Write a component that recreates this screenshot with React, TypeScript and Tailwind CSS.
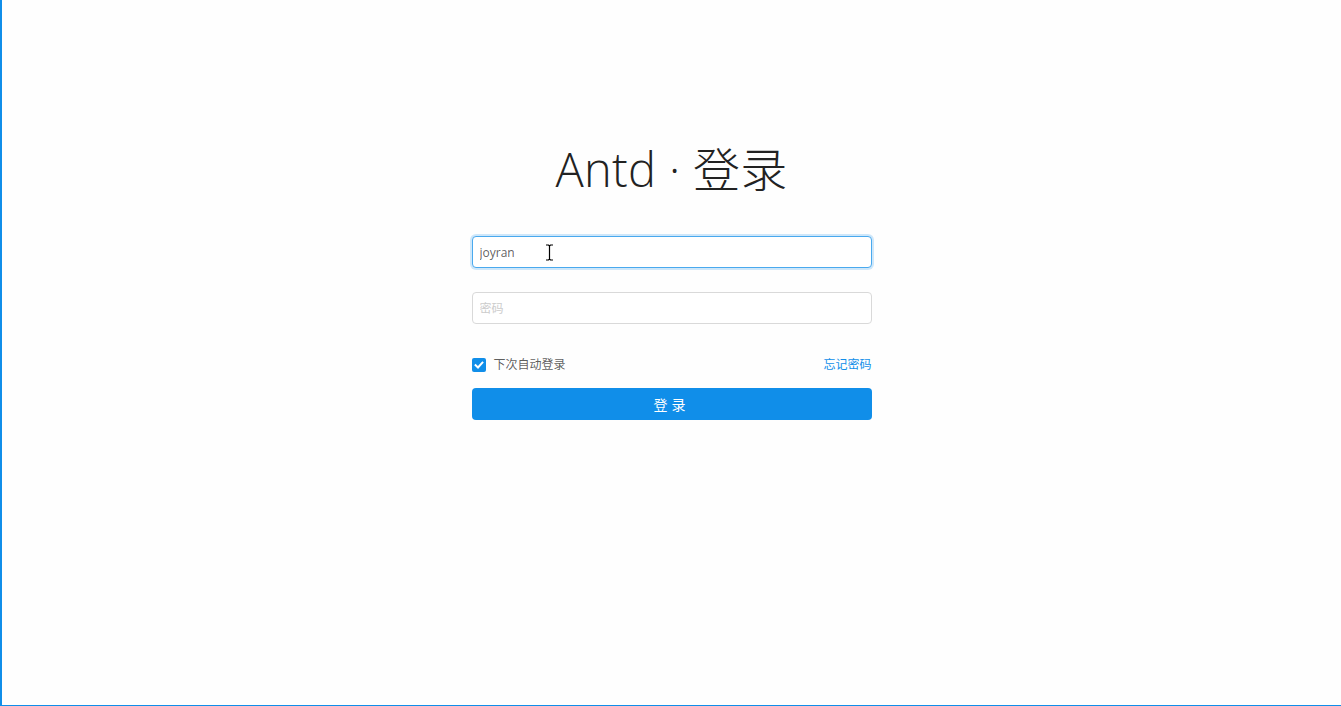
import { useState } from "react";

const font = { fontFamily: '"Open Sans", "Noto Sans CJK SC", sans-serif' };

export default function App() {
  const [user, setUser] = useState("joyran");
  const [password, setPassword] = useState("");
  const [remember, setRemember] = useState(true);

  return (
    <div
      className="relative h-[706px] w-full border-b border-l-2 border-[#108ee9] bg-[#fefefe] text-[12px] text-[rgba(0,0,0,0.65)]"
      style={font}
    >
      <div className="flex flex-col items-center pt-[138px]">
        <h1 className="text-[47px] leading-[62px] font-light tracking-[0.3px] text-[#222]">Antd · 登录</h1>

        <form className="mt-[36px] flex w-[400px] flex-col" onSubmit={(e) => e.preventDefault()}>
          <input
            value={user}
            onChange={(e) => setUser(e.target.value)}
            placeholder="用户名"
            className="h-8 w-full rounded-[4px] border border-[#49a9ee] bg-white px-[7px] text-[12px] text-[rgba(0,0,0,0.65)] shadow-[0_0_0_2px_rgba(16,142,233,0.2)] outline-none"
          />
          <input
            type="password"
            value={password}
            onChange={(e) => setPassword(e.target.value)}
            placeholder="密码"
            className="mt-6 h-8 w-full rounded-[4px] border border-[#d9d9d9] bg-white px-[7px] text-[12px] outline-none placeholder:text-[#ccc]"
          />

          <div className="mt-6 flex h-8 items-center justify-between pt-[2px]">
            <label className="flex cursor-pointer items-center gap-2">
              <span
                onClick={() => setRemember(!remember)}
                className={
                  remember
                    ? "flex h-[14px] w-[14px] items-center justify-center rounded-[2px] bg-[#108ee9]"
                    : "flex h-[14px] w-[14px] items-center justify-center rounded-[2px] border border-[#d9d9d9] bg-white"
                }
              >
                {remember && (
                  <svg viewBox="0 0 14 14" className="h-[14px] w-[14px]">
                    <path d="M3.6 7.2 L6 9.5 L10.4 4.6" fill="none" stroke="#fff" strokeWidth="2" strokeLinecap="square" />
                  </svg>
                )}
              </span>
              <span>下次自动登录</span>
            </label>
            <a href="#" className="text-[#108ee9]">
              忘记密码
            </a>
          </div>

          <button
            type="submit"
            className="mt-2 h-8 w-full rounded-[4px] bg-[#108ee9] text-[14px] tracking-[4px] text-white"
          >
            登录
          </button>
        </form>
      </div>

      <svg viewBox="0 0 9 17" className="absolute top-[244px] left-[543px] h-[17px] w-[9px]">
        <path d="M1 1 H3.5 L4.5 2 L5.5 1 H8 M4.5 2 V15 M1 16 H3.5 L4.5 15 L5.5 16 H8" fill="none" stroke="#000" strokeWidth="1.2" />
      </svg>
    </div>
  );
}
